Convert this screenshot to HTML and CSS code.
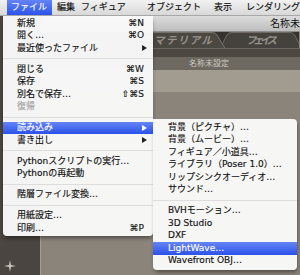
FILE: index.html
```html
<!DOCTYPE HTML>
<html lang="ja">
<head>
	<meta charset="UTF-8">
	<title>ファイル メニュー</title>
	<link rel="stylesheet" href="styles.css">
</head>
<body>
	<div id="screen">
		<div class="menubar">
			<span class="mb-item mb-file active">ファイル</span>
			<span class="mb-item mb-edit">編集</span>
			<span class="mb-item mb-figure">フィギュア</span>
			<span class="mb-item mb-object">オブジェクト</span>
			<span class="mb-item mb-display">表示</span>
			<span class="mb-item">レンダリング</span>
		</div>

		<div class="workspace">
			<div class="sidebar">
				<svg class="sparkle" width="12" height="12" viewBox="0 0 12 12">
					<path d="M6 0 L7 5 L12 6 L7 7 L6 12 L5 7 L0 6 L5 5 Z" fill="#c9c4ba"/>
				</svg>
			</div>
			<div class="main">
				<div class="toolbar">
					<svg class="doc-icon" width="9" height="11" viewBox="0 0 9 11">
						<path d="M0.5 0.5 H6 L8.5 3 V10.5 H0.5 Z" fill="#fff" stroke="#b5b5b5"/>
						<circle cx="4.5" cy="6" r="3" fill="#d8342c"/>
						<path d="M3.5 4.5 L5.5 6 L3.5 7.5" fill="none" stroke="#fff" stroke-width="1"/>
					</svg>
					<span class="doc-title">名称未設定</span>
				</div>
				<svg class="tabs" width="258" height="16" viewBox="42 0 258 16">
					<rect x="42" y="0" width="258" height="16" fill="#36332f"/>
					<path d="M221 16.5 L228 3 Q229.5 0.5 233 0.5 L291 0.5 Q294 0.5 295.5 3 L303 16.5" fill="#45423d" stroke="#6f6b64"/>
					<path d="M40 16.5 V0.5 H213 Q216.5 0.5 218 3 L226 16.5" fill="#4b4842" stroke="#77736b"/>
					<text x="155" y="12" textLength="58" class="tab-label">マテリアル</text>
					<text x="247" y="12" textLength="31" class="tab-label">フェイス</text>
				</svg>
				<div class="band"></div>
				<div class="scene-title">名称未設定</div>
				<div class="scene-top"></div>
				<div class="scene"></div>
			</div>
		</div>

		<ul class="menu file-menu">
			<li>新規<span class="key">⌘N</span></li>
			<li>開く…<span class="key">⌘O</span></li>
			<li>最近使ったファイル<span class="arrow"></span></li>
			<li class="sep"></li>
			<li>閉じる<span class="key">⌘W</span></li>
			<li>保存<span class="key">⌘S</span></li>
			<li>別名で保存…<span class="key">⇧⌘S</span></li>
			<li class="disabled">復帰</li>
			<li class="sep"></li>
			<li class="selected">読み込み<span class="arrow"></span></li>
			<li>書き出し<span class="arrow"></span></li>
			<li class="sep"></li>
			<li>Pythonスクリプトの実行…</li>
			<li>Pythonの再起動</li>
			<li class="sep"></li>
			<li>階層ファイル変換…</li>
			<li class="sep"></li>
			<li>用紙設定…</li>
			<li>印刷…<span class="key">⌘P</span></li>
		</ul>

		<ul class="menu sub-menu">
			<li>背景（ピクチャ）…</li>
			<li>背景（ムービー）…</li>
			<li>フィギュア／小道具…</li>
			<li>ライブラリ（Poser 1.0）…</li>
			<li>リップシンクオーディオ…</li>
			<li>サウンド…</li>
			<li class="sep"></li>
			<li>BVHモーション…</li>
			<li>3D Studio</li>
			<li>DXF</li>
			<li class="selected">LightWave…</li>
			<li>Wavefront OBJ…</li>
		</ul>
	</div>
</body>
</html>
```

FILE: styles.css
```css
body, html {
	margin: 0;
	padding: 0;
	background: #8a847b;
}

#screen {
	position: relative;
	width: 300px;
	height: 275px;
	overflow: hidden;
	display: flex;
	flex-direction: column;
	font: 9px/1 "DejaVu Sans", "Noto Sans CJK JP", sans-serif;
	color: #111;
}

/* menu bar */
.menubar {
	flex: none;
	height: 16px;
	display: flex;
	padding-left: 7px;
	background: linear-gradient(#f2f2f2, #d8d8d8);
	border-bottom: 1px solid #a8a8a8;
	box-sizing: border-box;
	white-space: nowrap;
	-webkit-text-stroke: 0.15px currentColor;
}

.mb-item {
	flex: none;
	padding-left: 5px;
	line-height: 15px;
	box-sizing: border-box;
}

.mb-file { width: 45px; padding-left: 4px; }
.mb-edit { width: 24px; }
.mb-figure { width: 66px; }
.mb-object { width: 67px; }
.mb-display { width: 32px; }

.mb-item.active {
	color: #fff;
	background: linear-gradient(#6585f5, #2b52ea);
}

/* application behind the menus */
.workspace {
	flex: 1;
	display: flex;
	min-height: 0;
}

.sidebar {
	flex: none;
	width: 41px;
	background: #4a4540;
	border-right: 1px solid #a39d92;
	display: flex;
	align-items: flex-end;
	padding: 0 0 3px 4px;
	box-sizing: border-box;
}

.main {
	flex: 1;
	display: flex;
	flex-direction: column;
	min-width: 0;
}

.toolbar {
	flex: none;
	height: 16px;
	display: flex;
	align-items: center;
	gap: 3px;
	padding-left: 226px;
	background: linear-gradient(#dcdcdc, #bebebe);
	border-bottom: 1px solid #8d8d8d;
	box-sizing: border-box;
	white-space: nowrap;
	font-size: 10px;
}

.tabs {
	display: block;
	flex: none;
}

.tab-label {
	font: italic bold 10.5px "Noto Sans CJK JP", sans-serif;
	fill: #96918a;
}

.band {
	flex: none;
	height: 9px;
	background: #4d4842;
	border-top: 1px solid #6a655d;
	box-sizing: border-box;
}

.scene-title {
	flex: none;
	height: 13px;
	line-height: 13px;
	padding-left: 148px;
	font-size: 8px;
	color: #cfcac1;
	background: #6d6860;
}

.scene-top {
	flex: none;
	height: 22px;
	background: #a29c90;
}

.scene {
	flex: 1;
	background: #8a847b;
}

/* menus */
.menu {
	position: absolute;
	margin: 0;
	list-style: none;
	background: rgba(248, 248, 248, 0.98);
	box-shadow: 0 3px 4px -1px rgba(0, 0, 0, 0.45);
	-webkit-text-stroke: 0.15px currentColor;
}

.file-menu {
	left: 3px;
	top: 16px;
	width: 150px;
	padding: 1px 0;
	border-radius: 0 0 4px 4px;
}

.sub-menu {
	left: 153px;
	top: 119px;
	width: 144px;
	padding: 2px 0 3px;
	border-radius: 0 4px 4px 4px;
	box-shadow: 1px 3px 4px -1px rgba(0, 0, 0, 0.45);
}

.menu li {
	display: flex;
	align-items: center;
	height: 12.5px;
	padding: 0 9px 0 14px;
	white-space: nowrap;
}

.sub-menu li {
	padding-left: 15px;
}

.menu .sep {
	height: 8.5px;
	padding: 0;
}

.menu .sep:before {
	content: "";
	flex: 1;
	height: 1px;
	background: #dddddd;
}

.menu .disabled {
	color: #a3a3a3;
}

.menu .selected {
	color: #fff;
	background: linear-gradient(#6585f5, #2b52ea);
}

.key {
	margin-left: auto;
}

.arrow {
	margin: 0 -3px 0 auto;
	width: 0;
	height: 0;
	border-left: 5px solid #222;
	border-top: 3px solid transparent;
	border-bottom: 3px solid transparent;
}

.selected .arrow {
	border-left-color: #fff;
}
```
